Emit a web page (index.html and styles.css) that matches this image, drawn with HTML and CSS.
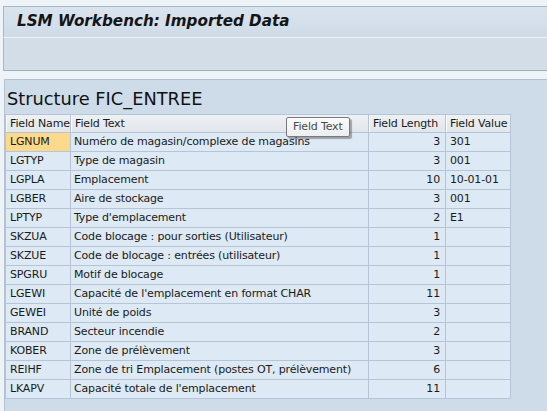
FILE: index.html
```html
<!DOCTYPE html>
<html>
<head>
<meta charset="utf-8">
<title>LSM Workbench: Imported Data</title>
<link rel="stylesheet" href="styles.css">
</head>
<body>
  <div class="titlebar"><h1 class="title">LSM Workbench: Imported Data</h1></div>
  <div class="toolbar"></div>
  <div class="panel">
    <h2 class="structure">Structure FIC_ENTREE</h2>
    <div class="grid">
      <div class="hd">Field Name</div><div class="hd">Field Text</div><div class="hd">Field Length</div><div class="hd">Field Value</div>
      <div class="c name sel">LGNUM</div><div class="c">Numéro de magasin/complexe de magasins</div><div class="c num">3</div><div class="c val">301</div>
      <div class="c name">LGTYP</div><div class="c">Type de magasin</div><div class="c num">3</div><div class="c val">001</div>
      <div class="c name">LGPLA</div><div class="c">Emplacement</div><div class="c num">10</div><div class="c val">10-01-01</div>
      <div class="c name">LGBER</div><div class="c">Aire de stockage</div><div class="c num">3</div><div class="c val">001</div>
      <div class="c name">LPTYP</div><div class="c">Type d'emplacement</div><div class="c num">2</div><div class="c val">E1</div>
      <div class="c name">SKZUA</div><div class="c">Code blocage : pour sorties (Utilisateur)</div><div class="c num">1</div><div class="c val"></div>
      <div class="c name">SKZUE</div><div class="c">Code de blocage : entrées (utilisateur)</div><div class="c num">1</div><div class="c val"></div>
      <div class="c name">SPGRU</div><div class="c">Motif de blocage</div><div class="c num">1</div><div class="c val"></div>
      <div class="c name">LGEWI</div><div class="c">Capacité de l'emplacement en format CHAR</div><div class="c num">11</div><div class="c val"></div>
      <div class="c name">GEWEI</div><div class="c">Unité de poids</div><div class="c num">3</div><div class="c val"></div>
      <div class="c name">BRAND</div><div class="c">Secteur incendie</div><div class="c num">2</div><div class="c val"></div>
      <div class="c name">KOBER</div><div class="c">Zone de prélèvement</div><div class="c num">3</div><div class="c val"></div>
      <div class="c name">REIHF</div><div class="c">Zone de tri Emplacement (postes OT, prélèvement)</div><div class="c num">6</div><div class="c val"></div>
      <div class="c name">LKAPV</div><div class="c">Capacité totale de l'emplacement</div><div class="c num">11</div><div class="c val"></div>
    </div>
    <div class="tooltip">Field Text</div>
  </div>
</body>
</html>
```

FILE: styles.css
```css
html, body {
  margin: 0;
  padding: 0;
}
body {
  width: 547px;
  height: 411px;
  overflow: hidden;
  background: #eef3f8;
  display: flex;
  flex-direction: column;
  padding-top: 6px;
  box-sizing: border-box;
  font-family: "DejaVu Sans", "Liberation Sans", sans-serif;
  color: #1a1a1a;
}
.titlebar {
  margin-left: 3px;
  border-top: 1px solid #a7b7c8;
  border-left: 1px solid #a7b7c8;
  background: linear-gradient(#dae4ee, #cedbe7);
  height: 31px;
  box-sizing: border-box;
  padding: 0 0 2px 13px;
}
.title {
  margin: 0;
  font-size: 15.2px;
  font-weight: bold;
  font-style: italic;
  line-height: 29px;
  color: #151515;
}
.toolbar {
  margin-left: 3px;
  border-left: 1px solid #a7b7c8;
  border-top: 1px solid #eef3f8;
  border-bottom: 1px solid #9eafc1;
  background: #d2dde8;
  height: 32px;
}
.panel {
  position: relative;
  flex: 1;
  margin-top: 8px;
  margin-left: 4px;
  border-top: 1px solid #b2c2d2;
  border-left: 1px solid #b2c2d2;
  background: #cedcea;
}
.structure {
  margin: 0;
  padding: 7px 0 0 2px;
  height: 34px;
  box-sizing: border-box;
  font-size: 17.8px;
  font-weight: normal;
  line-height: 24px;
  color: #111;
}
.grid {
  display: grid;
  grid-template-columns: 64px 297px 76px 64px;
  grid-template-rows: 17px;
  grid-auto-rows: 18px;
  gap: 1px;
  width: max-content;
  background: #b6c5d5;
  border: 1px solid #b6c5d5;
  font-size: 11px;
  letter-spacing: -0.15px;
}
.hd {
  background: linear-gradient(#eef1f4, #e1e6ec);
  box-shadow: inset 1px 0 0 #f7f9fb;
  padding-left: 4px;
  line-height: 17px;
  white-space: nowrap;
  color: #1a1a1a;
}
.c {
  background: #dde9f4;
  line-height: 18px;
  padding-left: 3px;
  white-space: nowrap;
  overflow: hidden;
}
.name {
  padding-left: 4px;
}
.sel {
  background: #fdd98b;
}
.num {
  text-align: right;
  padding: 0 5px 0 0;
}
.val {
  padding-left: 4px;
}
.tooltip {
  position: absolute;
  left: 281px;
  top: 37px;
  width: 64px;
  height: 20px;
  box-sizing: border-box;
  border: 1px solid #7a7a7a;
  border-radius: 2px;
  background: linear-gradient(#fbfbfb, #eceef0);
  box-shadow: 2px 2px 1px rgba(0, 0, 0, 0.3);
  font-size: 11px;
  letter-spacing: -0.15px;
  line-height: 18px;
  padding-left: 6px;
  color: #4a4a4a;
  white-space: nowrap;
}
```
